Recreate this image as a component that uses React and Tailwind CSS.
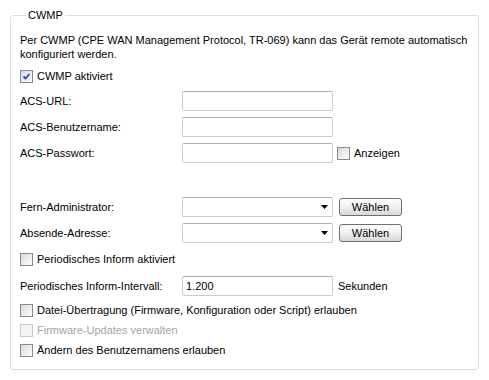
import { useState } from "react";

const font = { fontFamily: "'Liberation Sans', Arial, sans-serif" };

function Check({ checked, disabled, label, onChange }) {
    return (
        <label className={"flex items-center gap-[4px] h-[16px] whitespace-nowrap " + (disabled ? "text-[#a3a3a3]" : "text-black")}>
            <span
                className={
                    "relative w-[13px] h-[13px] border shrink-0 " +
                    (disabled
                        ? "border-[#cacaca] bg-[#f4f4f4]"
                        : "border-[#8a8a8a] bg-gradient-to-br from-[#d9d9d9] via-[#ececec] to-[#fbfbfb]")
                }
                onClick={() => !disabled && onChange && onChange(!checked)}
            >
                {checked && (
                    <svg viewBox="0 0 11 11" className="absolute inset-0 w-[11px] h-[11px]">
                        <path d="M2.5 5.5 L4.5 7.5 L8.5 3" fill="none" stroke="#2146c8" strokeWidth="1.8" />
                    </svg>
                )}
            </span>
            <span>{label}</span>
        </label>
    );
}

function TextBox({ value, className = "" }) {
    return (
        <div className={"h-[20px] w-[151px] shrink-0 rounded-[2px] border border-[#c7cdd3] border-t-[#a9b0b8] bg-white px-[3px] flex items-center " + className}>
            {value}
        </div>
    );
}

function Combo() {
    return (
        <div className="h-[20px] w-[151px] shrink-0 rounded-[2px] border border-[#c7cdd3] border-t-[#a9b0b8] bg-white flex items-center justify-end pr-[4px]">
            <svg width="7" height="4" viewBox="0 0 7 4">
                <path d="M0 0 H7 L3.5 4 Z" fill="#000" />
            </svg>
        </div>
    );
}

function ChooseButton() {
    return (
        <button className="h-[18px] w-[63px] rounded-[3px] border border-[#707070] bg-gradient-to-b from-[#fdfdfd] via-[#f0f0f0] to-[#d8d8d8] text-black leading-none">
            Wählen
        </button>
    );
}

function Row({ label, children }) {
    return (
        <div className="flex items-center h-[20px] whitespace-nowrap">
            <span className="w-[162px] shrink-0">{label}</span>
            {children}
        </div>
    );
}

export default function App() {
    const [cwmp, setCwmp] = useState(true);
    const [show, setShow] = useState(false);
    const [periodic, setPeriodic] = useState(false);
    const [files, setFiles] = useState(false);
    const [rename, setRename] = useState(false);

    return (
        <div className="w-[489px] h-[380px] bg-white px-[10px] pt-[9px] text-[11px] leading-[14px]" style={font}>
            <fieldset className="border border-[#d5dfe5] rounded-[3px] pl-[9px] pr-[8px] pb-[10px] h-[361px]">
                <legend className="px-[2px] ml-[6px] leading-[13px]">CWMP</legend>
                <p className="mt-[11px] leading-[14px] whitespace-nowrap">
                    Per CWMP (CPE WAN Management Protocol, TR-069) kann das Gerät remote automatisch
                    <br />
                    konfiguriert werden.
                </p>
                <div className="mt-[7px]">
                    <Check label="CWMP aktiviert" checked={cwmp} onChange={setCwmp} />
                </div>

                <div className="mt-[7px] flex flex-col gap-[6px]">
                    <Row label="ACS-URL:"><TextBox /></Row>
                    <Row label="ACS-Benutzername:"><TextBox /></Row>
                    <Row label="ACS-Passwort:">
                        <TextBox />
                        <span className="ml-[4px]">
                            <Check label="Anzeigen" checked={show} onChange={setShow} />
                        </span>
                    </Row>
                </div>

                <div className="mt-[34px] flex flex-col gap-[6px]">
                    <Row label="Fern-Administrator:">
                        <Combo />
                        <span className="ml-[6px]"><ChooseButton /></span>
                    </Row>
                    <Row label="Absende-Adresse:">
                        <Combo />
                        <span className="ml-[6px]"><ChooseButton /></span>
                    </Row>
                </div>

                <div className="mt-[8px]">
                    <Check label="Periodisches Inform aktiviert" checked={periodic} onChange={setPeriodic} />
                </div>

                <div className="mt-[9px]">
                    <Row label="Periodisches Inform-Intervall:">
                        <TextBox value="1.200" />
                        <span className="ml-[5px]">Sekunden</span>
                    </Row>
                </div>

                <div className="mt-[6px] flex flex-col gap-[4px]">
                    <Check label="Datei-Übertragung (Firmware, Konfiguration oder Script) erlauben" checked={files} onChange={setFiles} />
                    <Check label="Firmware-Updates verwalten" disabled />
                    <Check label="Ändern des Benutzernamens erlauben" checked={rename} onChange={setRename} />
                </div>
            </fieldset>
        </div>
    );
}
